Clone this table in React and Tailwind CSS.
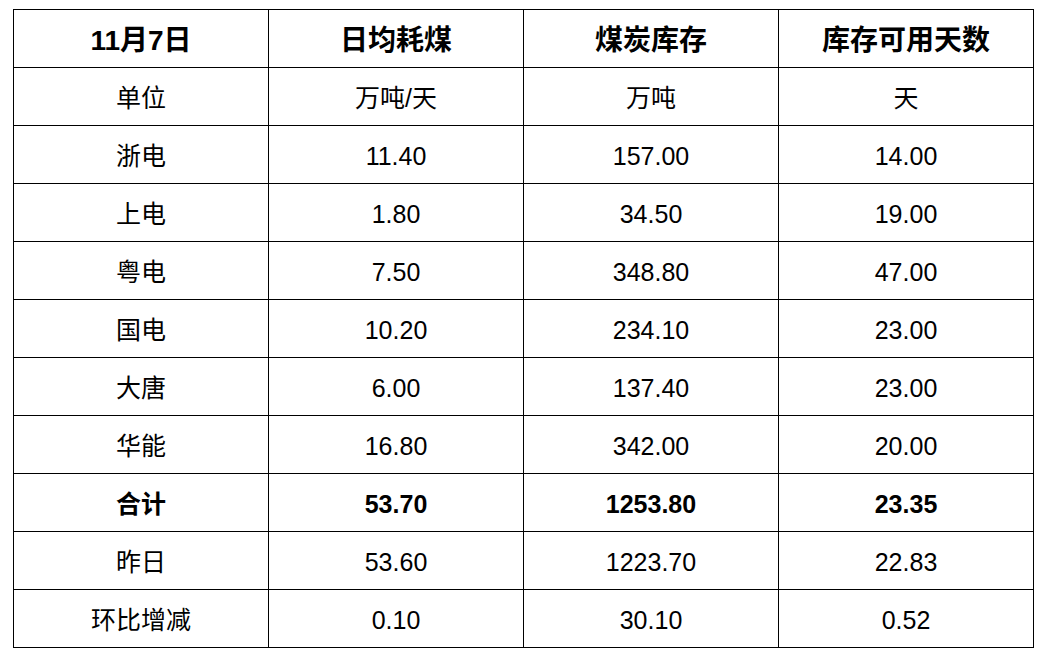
const header = ["11月7日", "日均耗煤", "煤炭库存", "库存可用天数"];

const rows = [
  { cells: ["单位", "万吨/天", "万吨", "天"] },
  { cells: ["浙电", "11.40", "157.00", "14.00"] },
  { cells: ["上电", "1.80", "34.50", "19.00"] },
  { cells: ["粤电", "7.50", "348.80", "47.00"] },
  { cells: ["国电", "10.20", "234.10", "23.00"] },
  { cells: ["大唐", "6.00", "137.40", "23.00"] },
  { cells: ["华能", "16.80", "342.00", "20.00"] },
  { cells: ["合计", "53.70", "1253.80", "23.35"], bold: true },
  { cells: ["昨日", "53.60", "1223.70", "22.83"] },
  { cells: ["环比增减", "0.10", "30.10", "0.52"] },
];

function Row({ cells, bold, head }) {
  return (
    <div className="flex">
      {cells.map((text, i) => (
        <div
          key={i}
          className={`box-border flex h-[58px] w-[255px] items-center justify-center border-b border-r border-black pt-1 leading-none text-black ${head ? "text-[28px]" : "text-[25px]"} ${bold ? "font-bold" : "font-normal"}`}
        >
          {text}
        </div>
      ))}
    </div>
  );
}

export default function App() {
  return (
    <div
      className="h-[655px] w-[1049px] bg-white pl-[13px] pt-[9px]"
      style={{ fontFamily: '"Liberation Sans", Arial, "Noto Sans CJK SC", sans-serif' }}
    >
      <div className="box-border w-[1021px] border-l border-t border-black">
        <Row cells={header} bold head />
        {rows.map((r, i) => (
          <Row key={i} cells={r.cells} bold={r.bold} />
        ))}
      </div>
    </div>
  );
}
